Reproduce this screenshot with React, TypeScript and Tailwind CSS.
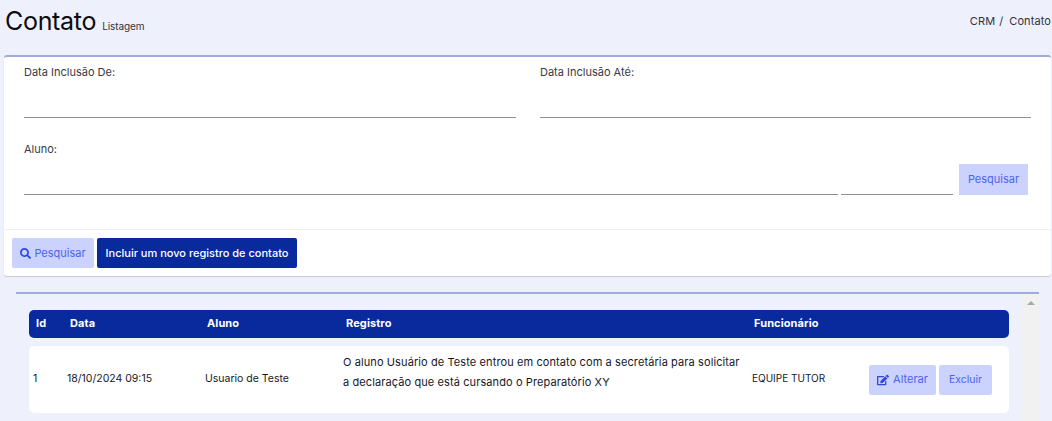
import { FaEdit, FaSearch } from "react-icons/fa";

const fontStack = { fontFamily: "Inter, 'Noto Sans', sans-serif" };

function Field(props: { label: string; className?: string }) {
  return (
    <div className={props.className}>
      <div className="h-[53px] text-[11px] leading-[16px] text-[#3a3a44]">{props.label}</div>
      <div className="h-[1px] bg-[#8f8f8f]"></div>
    </div>
  );
}

export default function App() {
  return (
    <div className="h-[421px] w-[1052px] overflow-hidden bg-[#eef0fb]" style={fontStack}>
      <div className="flex h-[55px] items-start justify-between pl-[5px] pr-[1px]">
        <div className="flex items-baseline pt-[3px]">
          <span className="text-[25px] leading-[36px] font-normal tracking-[-0.3px] text-[#0b0b12]">Contato</span>
          <span className="ml-[6px] text-[10px] tracking-[-0.1px] text-[#33333d]">Listagem</span>
        </div>
        <div className="flex pt-[13px] text-[11px] leading-[16px] tracking-[0.1px] text-[#33333d]">
          <span>CRM</span>
          <span className="ml-[4px]">/</span>
          <span className="ml-[6px]">Contato</span>
        </div>
      </div>

      <div className="ml-[4px] mr-[1px] h-[221px] rounded-[3px] border-t-2 border-[#9fabdb] bg-white shadow-[0_1px_1px_rgba(0,0,0,0.16)]">
        <div className="h-[173px] border-b border-[#f0f0f0] px-[20px] pt-[7px]">
          <div className="flex gap-[24px]">
            <Field label="Data Inclusão De:" className="w-[492px]" />
            <Field label="Data Inclusão Até:" className="w-[491px]" />
          </div>
          <div className="mt-[23px] flex items-end">
            <Field label="Aluno:" className="w-[814px]" />
            <div className="ml-[3px] h-[1px] w-[112px] bg-[#8f8f8f]"></div>
            <button className="ml-[6px] h-[31px] w-[69px] bg-[#cad2fd] text-[11px] text-[#4c63f0]">Pesquisar</button>
          </div>
        </div>
        <div className="flex gap-[3px] pl-[8px] pt-[8px]">
          <button className="flex h-[30px] w-[82px] items-center justify-center gap-[3px] rounded-[2px] bg-[#cad2fd] text-[11px] text-[#4c63f0]">
            <FaSearch className="h-[11px] w-[11px] text-[#2d49e0]" />
            Pesquisar
          </button>
          <button className="h-[30px] w-[200px] rounded-[2px] bg-[#082a9c] text-[11px] font-medium text-white">
            Incluir um novo registro de contato
          </button>
        </div>
      </div>

      <div className="ml-[16px] mr-[13px] mt-[16px] flex h-[140px] border-t-2 border-[#9fabdb]">
        <div className="flex-1 px-[13px] pt-[16px]">
          <div className="grid h-[28px] grid-cols-[41px_137px_139px_408px_255px] items-center rounded-[5px] bg-[#082a9c] pb-[1px] text-[11px] font-bold tracking-[0.1px] text-white">
            <span className="pl-[7px]">Id</span>
            <span>Data</span>
            <span>Aluno</span>
            <span>Registro</span>
            <span>Funcionário</span>
          </div>
          <div className="mt-[8px] grid h-[67px] grid-cols-[38px_138px_138px_409px_117px_auto] items-center rounded-[5px] bg-white text-[10.5px] text-[#17171f]">
            <span className="pb-[2px] pl-[4px]">1</span>
            <span className="pb-[2px]">18/10/2024 09:15</span>
            <span className="pb-[2px]">Usuario de Teste</span>
            <span className="mt-[6px] self-start text-[11px] leading-[20px] tracking-[0.1px]">
              O aluno Usuário de Teste entrou em contato com a secretária para solicitar
              <br />
              a declaração que está cursando o Preparatório XY
            </span>
            <span className="pb-[2px] text-[10px]">EQUIPE TUTOR</span>
            <div className="flex gap-[3px]">
              <button className="flex h-[30px] w-[67px] items-center justify-center gap-[4px] rounded-[2px] bg-[#cad2fd] text-[11px] text-[#4c63f0]">
                <FaEdit className="h-[12px] w-[12px] text-[#2d49e0]" />
                Alterar
              </button>
              <button className="h-[30px] w-[53px] rounded-[2px] bg-[#cad2fd] text-[10.5px] text-[#4c63f0]">Excluir</button>
            </div>
          </div>
        </div>
        <div className="flex w-[17px] justify-center bg-[#f1f1f1] pt-[7px]">
          <div className="h-0 w-0 border-x-[4px] border-b-[4px] border-x-transparent border-b-[#a8a8a8]"></div>
        </div>
      </div>
    </div>
  );
}
